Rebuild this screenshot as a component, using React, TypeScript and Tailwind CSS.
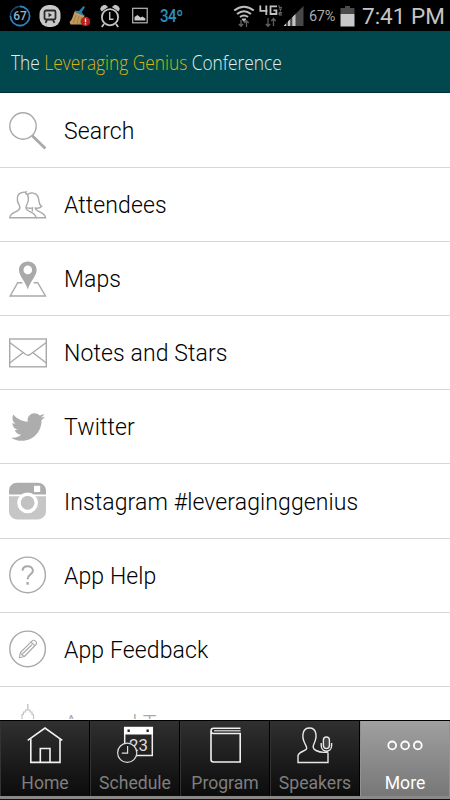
import React from 'react';
import { FaTwitter } from 'react-icons/fa';

const SearchIcon = () => (
  <svg width="38" height="38" viewBox="0 0 38 38" fill="none" stroke="#a9a9a9">
    <circle cx="14" cy="14" r="13.2" strokeWidth="1.4" />
    <path d="M23.3 23.8L36.4 36.6" strokeWidth="2.8" />
  </svg>
);

const AttendeesIcon = () => (
  <svg width="38" height="38" viewBox="0 0 38 38" fill="none" stroke="#a9a9a9" strokeWidth="1.4">
    <path d="M18.4 8.6C21.4 6 27.3 6.6 29 10.8C30.6 15 29.4 19 32.6 20.4C31.5 22.2 28.6 22.4 26.2 22C26.4 26 35.7 25.2 36.6 31.8H27M18 21.6C20 22.3 22 22.3 23.4 21.8V25.4" />
    <path fill="#fff" d="M.8 31.8C.8 27.3 5 26.6 8.3 25C11.4 23.2 11.3 21.2 10.2 19C7 14.5 7.8 8 12.4 6.8C14 6 15.8 6.2 17.2 5.8L16.6 7.2C20 9 20.3 14.5 17.6 19C16.6 21.2 16.8 23.4 19.6 25C22.8 26.8 26.6 27.2 27 31.8Z" />
  </svg>
);

const MapsIcon = () => (
  <svg width="38" height="38" viewBox="0 0 38 38" fill="none">
    <path d="M13.4 22.7H8.7L1.2 36H36.5L28.7 22.7H24.6" stroke="#a9a9a9" strokeWidth="1.4" />
    <path fillRule="evenodd" fill="#a9a9a9" d="M18.8 1.5C13.9 1.5 10 5 10 10C10 16 16 20.5 18.8 29.5C21.6 20.5 27.6 16 27.6 10C27.6 5 23.7 1.5 18.8 1.5ZM18.8 5.6A4.3 4.3 0 1 1 18.8 14.2A4.3 4.3 0 1 1 18.8 5.6Z" />
  </svg>
);

const NotesIcon = () => (
  <svg width="38" height="38" viewBox="0 0 38 38" fill="none" stroke="#a9a9a9" strokeWidth="1.4">
    <rect x=".7" y="5" width="36.6" height="27.8" />
    <path d="M.7 8.5L16.5 20.3C18.3 21.7 19.8 21.7 21.5 20.3L37.3 8.5M.7 29L14 18.7M37.3 29L24 18.7" />
  </svg>
);

const TwitterIcon = () => <FaTwitter className="ml-0.5 size-[34px]" color="#adadad" />;

const InstagramIcon = () => (
  <svg width="38" height="38" viewBox="0 0 38 38">
    <path d="M0 12.5V9C0 4 3.5.8 8.5.8H28.5C33.5.8 37 4 37 9V12.5Z" fill="#adadad" />
    <path d="M0 14.3H37V29C37 34 33.5 37.4 28.5 37.4H8.5C3.5 37.4 0 34 0 29Z" fill="#c6c6c6" />
    <circle cx="18.6" cy="20.8" r="8.6" fill="none" stroke="#fff" strokeWidth="3.6" />
    <circle cx="18.6" cy="20.8" r="6.8" fill="#c2c2c2" />
    <rect x="25" y="3.8" width="6.2" height="6.2" fill="#fff" />
  </svg>
);

const HelpIcon = () => (
  <svg width="38" height="38" viewBox="0 0 38 38" fill="none" stroke="#a9a9a9">
    <circle cx="18.6" cy="18.9" r="17.8" strokeWidth="1.4" />
    <path d="M13.6 14.8C13.6 11.8 15.7 10.3 18.6 10.3C21.6 10.3 23.9 12 23.9 14.8C23.9 18.5 18.6 18.3 18.6 23.3" strokeWidth="2" />
    <path d="M18.6 26V28.7" strokeWidth="2.4" />
  </svg>
);

const FeedbackIcon = () => (
  <svg width="38" height="38" viewBox="0 0 38 38" fill="none" stroke="#a9a9a9">
    <circle cx="18.6" cy="18.9" r="17.8" strokeWidth="1.4" />
    <g strokeWidth="1.1" strokeLinejoin="round">
      <path d="M10.3 27.8L11.4 22.5L23.4 10.6C25 9 28.8 12.6 27 14.5L15.3 26.5Z" />
      <path d="M11.4 22.5L12.8 24.8L15.3 26.5M22 12L25.8 15.7M13.4 24L23.2 14.5" />
    </g>
  </svg>
);

const AroundTownIcon = () => (
  <svg width="38" height="38" viewBox="0 0 38 38" fill="none" stroke="#c4c4c4">
    <path d="M18.8 0V6" strokeWidth="1.4" />
    <path d="M13 15V10.5H14.5V8H16.5V6H21V8H23V10.5H24.5V15" strokeWidth="1.2" />
  </svg>
);

const menuItems = [
  { label: 'Search', icon: SearchIcon },
  { label: 'Attendees', icon: AttendeesIcon },
  { label: 'Maps', icon: MapsIcon },
  { label: 'Notes and Stars', icon: NotesIcon },
  { label: 'Twitter', icon: TwitterIcon },
  { label: 'Instagram #leveraginggenius', icon: InstagramIcon },
  { label: 'App Help', icon: HelpIcon },
  { label: 'App Feedback', icon: FeedbackIcon },
  { label: 'Around Town', icon: AroundTownIcon, faded: true },
];

const HomeIcon = () => (
  <svg width="44" height="40" viewBox="0 0 44 40" fill="none" stroke="#f2f2f2" strokeWidth="1.6">
    <path d="M4.7 15.3L22 3L39.3 15.3M7.8 13.5V37.4H37V13.5M17.3 37.4V23.5H27V37.4" />
  </svg>
);

const ScheduleIcon = () => (
  <svg width="44" height="40" viewBox="0 0 44 40" fill="none">
    <path d="M11.7 18V2.5H39.3V30.5H23" stroke="#eee" strokeWidth="1.5" />
    <path d="M11 2H40V9.5H11Z" fill="#fff" />
    <path d="M14.5 4.5H16.8V7H14.5ZM33.5 4.5H35.8V7H33.5Z" fill="#222" />
    <text x="16" y="25.6" fontFamily="Roboto, sans-serif" fontSize="16.8" fill="#ddd">23</text>
    <circle cx="14.2" cy="27.8" r="9.6" fill="#202020" stroke="#ddd" strokeWidth="1.2" />
    <path d="M14.6 21V28.2H8.8" stroke="#ddd" strokeWidth="1.2" />
  </svg>
);

const ProgramIcon = () => (
  <svg width="44" height="40" viewBox="0 0 44 40" fill="none" stroke="#f0f0f0">
    <path d="M37.5 3.2H10.5C7.2 3.2 7.2 8.5 10.5 8.5H37.2V37H10.5Q8 37 8 34.5V6" strokeWidth="1.6" />
    <path d="M11 5.8H37.5" strokeWidth="1.1" />
  </svg>
);

const SpeakersIcon = () => (
  <svg width="44" height="40" viewBox="0 0 44 40" fill="none" stroke="#e8e8e8" strokeWidth="1.4">
    <path d="M35 27.5V37.5H5V30.5C6 26.8 11 26.5 13.3 24.3C14.5 22.7 13 20.8 12 18.8C8.5 12 9 3 16.5 3C24 3 24.3 12 21 18.8C19.5 21.8 20 24 23 25.5C26 27 31.5 27.7 35 26.8" />
    <rect x="30.4" y="12" width="6" height="11.6" rx="3" fill="#444" />
    <path d="M28.2 18V20.5C28.2 28 38.6 28 38.6 20.5V18M33.4 26V28" />
  </svg>
);

const MoreIcon = () => (
  <svg width="44" height="40" viewBox="0 0 44 40" fill="none" stroke="#fff" strokeWidth="1.8">
    <circle cx="9.2" cy="20.4" r="3.9" />
    <circle cx="22.1" cy="20.4" r="3.9" />
    <circle cx="34.8" cy="20.4" r="3.9" />
  </svg>
);

const tabs = [
  { label: 'Home', icon: HomeIcon },
  { label: 'Schedule', icon: ScheduleIcon },
  { label: 'Program', icon: ProgramIcon },
  { label: 'Speakers', icon: SpeakersIcon },
  { label: 'More', icon: MoreIcon, active: true },
];

const StatusBar = () => (
  <div className="h-[31px] shrink-0 bg-black flex items-center justify-between pl-[9px] pr-[6px] pt-px">
    <div className="flex items-center">
      <svg width="22" height="22" viewBox="0 0 22 22" fill="none">
        <circle cx="11" cy="11" r="9.6" stroke="#174368" strokeWidth="1.6" />
        <path d="M11 1.4A9.6 9.6 0 1 1 1.4 11" stroke="#2d81bd" strokeWidth="1.6" />
        <text x="11" y="15" textAnchor="middle" fontFamily="Roboto, sans-serif" fontSize="12" fontWeight="500" fill="#91b4cd">67</text>
      </svg>
      <svg className="ml-2" width="22" height="24" viewBox="0 0 22 24" fill="none">
        <rect x=".5" y="1" width="21" height="22" rx="9" fill="#c9c9c9" />
        <rect x="5.5" y="6.5" width="11" height="9" rx="1.5" stroke="#2b2b2b" strokeWidth="1.8" />
        <path d="M9.5 8.8L13 11L9.5 13.2Z" fill="#2b2b2b" />
        <path d="M8 16L6.5 18.8M14 16L15.5 18.8" stroke="#2b2b2b" strokeWidth="1.8" />
      </svg>
      <svg className="ml-2" width="22" height="22" viewBox="0 0 22 22">
        <path d="M5.5 6.5L15.5 10.5L14 19.5H1.5L.5 17C3 15 4 11 5.5 6.5Z" fill="#c39a5c" />
        <path d="M7 10L4.5 18M10 11L8 19M12.5 12L11 19" stroke="#97713a" strokeWidth=".7" fill="none" />
        <path d="M6 5.5L10 6L14.5 1L16 2L12.8 7.2L15.5 11L6 7Z" fill="#2381ae" />
        <circle cx="16.5" cy="16.5" r="4.7" fill="#bd1e1c" />
        <path d="M16.5 13.5V17.2M16.5 18.3V19.6" stroke="#eee" strokeWidth="1.4" />
      </svg>
      <svg className="ml-2" width="22" height="24" viewBox="0 0 22 24" fill="none" stroke="#c4c4c4">
        <circle cx="11" cy="13.2" r="8.1" strokeWidth="1.8" />
        <path d="M10.7 8V15.2H14.5" strokeWidth="1.4" />
        <path d="M2.5 7A3.6 3.6 0 0 1 8.5 3Z M19.5 7A3.6 3.6 0 0 0 13.5 3Z" fill="#c4c4c4" strokeWidth="1" />
        <path d="M5 20L2.8 23M17 20L19.2 23" strokeWidth="1.8" />
      </svg>
      <svg className="ml-2.5" width="18" height="18" viewBox="0 0 18 18">
        <rect x="1.7" y="1.3" width="14.5" height="14.5" fill="none" stroke="#b8b8b8" strokeWidth="1.2" />
        <path d="M3.5 13.5V10L6.5 8L9.5 10.5L11.5 9.5L14.3 11.5V13.5Z" fill="#ccc" />
      </svg>
      <span className="ml-[11px] mt-0.5 origin-left scale-x-[0.86] font-[Roboto] text-[17.5px] font-medium leading-none text-[#2c91b9] tracking-[-0.5px]">34º</span>
    </div>
    <div className="flex items-center">
      <svg width="22" height="24" viewBox="0 0 22 24" fill="none" stroke="#bdbdbd" strokeWidth="2">
        <path d="M1.2 6.5Q11 -1 20.8 6.5M4 10Q11 4.5 18 10M7 13Q11 10 15 13" />
        <path d="M9 15L11 17.5L13 15Z" fill="#bdbdbd" strokeWidth="1" />
        <path d="M8 16V22M5.8 20L8 22.3L10.2 20M13.5 23V17M11.3 19L13.5 16.7L15.7 19" stroke="#606060" strokeWidth="1.3" />
      </svg>
      <svg className="ml-1" width="24" height="24" viewBox="0 0 24 24" fill="none">
        <path d="M1.3 1.5V6.8H8.5M7.3 1.5V11M18 2.4H11.5V10H17.4V6.3H14.5" stroke="#c2c2c2" strokeWidth="1.8" />
        <path d="M20 1.2V3.4H23M19.8 5H23M21.4 5V7.5M23 8.6H20V11H23M20 9.8H22.5" stroke="#888" strokeWidth=".8" />
        <path d="M9 14V22M6.8 20L9 22.3L11.2 20M14.5 22V14.5M12.3 17L14.5 14.5L16.7 17" stroke="#606060" strokeWidth="1.3" />
      </svg>
      <svg width="21" height="22" viewBox="0 0 21 22">
        <path d="M.5 21L20.5 1V21Z" fill="#484848" />
        <path d="M1 21V20.5L3 18.5V21ZM5 21V16.5L7.2 14.3V21ZM9.3 21V12.2L12.5 9V21Z" fill="#c4c4c4" />
      </svg>
      <span className="ml-[5px] mt-0.5 w-[28px] whitespace-nowrap font-[Roboto] text-[14.5px] leading-none tracking-[-0.3px] text-[#aaa]">67%</span>
      <svg className="ml-[3px]" width="15" height="21" viewBox="0 0 15 21">
        <path d="M5 0H10V2H14.5V8H.5V2H5Z" fill="#4b4b4b" />
        <path d="M.5 8H14.5V20.5H.5Z" fill="#c8c8c8" />
      </svg>
      <span className="ml-[7px] w-[82px] whitespace-nowrap font-[Roboto] text-[22.5px] leading-none text-[#c5c5c5]">7:41 PM</span>
    </div>
  </div>
);

const App = () => {
  return (
    <div className="w-[450px] h-[800px] flex flex-col overflow-hidden bg-white">
      <StatusBar />

      <header className="h-[62px] shrink-0 bg-[#00484d] border-b border-[#012f37] flex items-center pl-[10.5px] pt-[3px]">
        <h1 className="origin-left scale-x-[0.866] whitespace-nowrap font-['Open_Sans'] text-[20px] font-light leading-none text-[#e2eeee]">
          The <span className="text-[#dcb314]">Leveraging Genius</span> Conference
        </h1>
      </header>

      <main className="flex-1 min-h-0 overflow-hidden border-b border-white pt-px">
        <ul>
          {menuItems.map(({ label, icon: Icon, faded }) => (
            <li key={label} className="h-[74.1px] flex items-center border-b border-[#d6d6d6] pl-[9px]">
              <div className="w-[55px] shrink-0">
                <Icon />
              </div>
              <span
                className={
                  faded
                    ? 'pt-0.5 whitespace-nowrap font-[Roboto] text-[23px] font-light leading-none tracking-[0.11px] text-[#aaa]'
                    : 'pt-0.5 whitespace-nowrap font-[Roboto] text-[23px] font-light leading-none tracking-[0.11px] text-black'
                }
              >
                {label}
              </span>
            </li>
          ))}
        </ul>
      </main>

      <nav className="h-20 shrink-0 flex flex-col bg-[#111]">
        <div className="h-[76px] grid grid-cols-5 border-t border-black">
          {tabs.map(({ label, icon: Icon, active }) => (
            <div
              key={label}
              className={
                active
                  ? 'flex flex-col items-center bg-linear-to-b from-[#a0a0a0] to-[#777] border-x border-[#929292] pt-[4px] text-white'
                  : 'flex flex-col items-center bg-linear-to-b from-[#303030] to-[#0c0c0c] border-r border-r-black border-l border-l-[#333] pt-[4px] text-[#7f7f7f]'
              }
            >
              <Icon />
              <span className="mt-[8px] font-[Roboto] text-[17.6px] leading-[20px]">{label}</span>
            </div>
          ))}
        </div>
        <div className="h-[3px] bg-[#8b8888]" />
      </nav>
    </div>
  );
};

export default App;
